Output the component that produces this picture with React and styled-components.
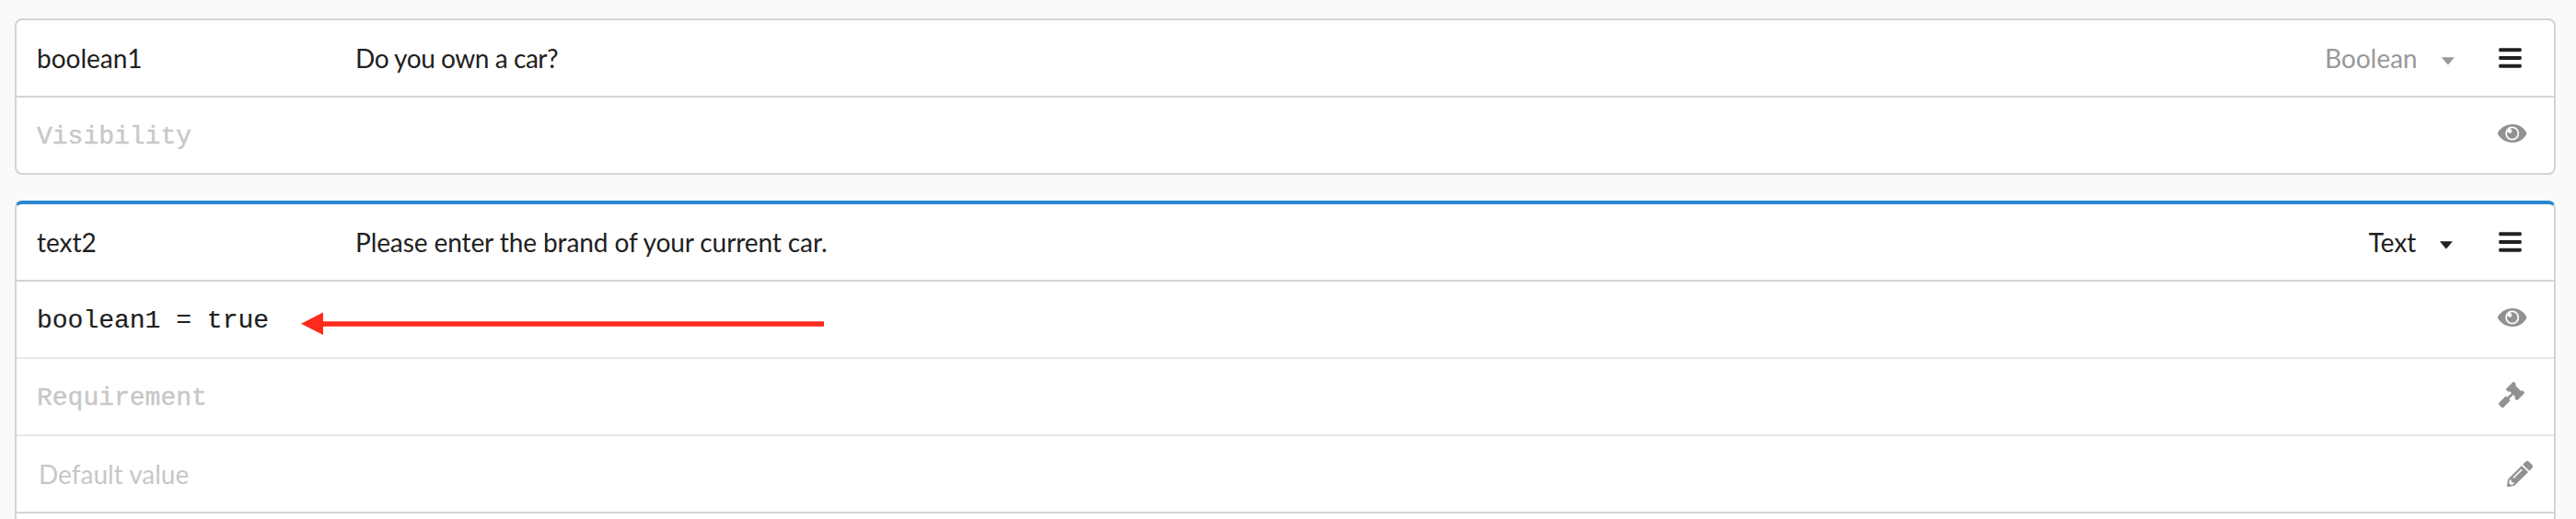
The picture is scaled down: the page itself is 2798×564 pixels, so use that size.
import React from "react";
import styled, { createGlobalStyle } from "styled-components";
import { FaBars, FaGavel, FaPencilAlt } from "react-icons/fa";

const GlobalStyle = createGlobalStyle`
  * { box-sizing: border-box; }
  body {
    margin: 0;
    background: #fafafa;
    font-family: Lato, "Liberation Sans", sans-serif;
    font-size: 28px;
    color: #212121;
  }
`;

const Page = styled.main`
  height: 564px;
  overflow: hidden;
  padding: 20px 22px 0 16px;
`;

const Card = styled.section`
  background: #fff;
  border: 2px solid #d4d4d5;
  border-top: ${(p) => (p.$active ? "4px solid #2a87d0" : "2px solid #d4d4d5")};
  border-radius: 8px;
  & + & { margin-top: 28px; }
`;

const Row = styled.div`
  position: relative;
  display: flex;
  align-items: center;
  height: ${(p) => (p.$last ? 82 : 84)}px;
  padding: 0 22px;
  border-bottom: ${(p) => (p.$last ? "none" : `2px solid ${p.$light ? "#e8e8e8" : "#d4d4d5"}`)};
`;

const Name = styled.div`
  width: 346px;
  white-space: nowrap;
`;

const Label = styled.div`
  flex: 1;
  white-space: nowrap;
  letter-spacing: ${(p) => p.$tracking || 0}px;
`;

const Type = styled.div`
  display: flex;
  align-items: center;
  gap: 26px;
  margin-right: ${(p) => (p.$muted ? 48.3 : 49.6)}px;
  color: ${(p) => (p.$muted ? "#999" : "#212121")};
`;

const Caret = styled.svg`
  display: block;
  width: 14px;
  height: 9px;
  margin-top: 6px;
  fill: currentColor;
`;

const MenuIcon = styled(FaBars)`
  width: 25px;
  height: 28px;
  margin-right: 13px;
`;

const Expression = styled.div`
  flex: 1;
  padding-top: 2px;
  font-family: "Courier New", "Liberation Mono", monospace;
  white-space: pre;
  color: ${(p) => (p.$filled ? "#212121" : "#c7c7c7")};
  -webkit-text-stroke: ${(p) => (p.$filled ? 0.2 : 0.4)}px currentColor;
`;

const Placeholder = styled.div`
  flex: 1;
  padding-left: 2px;
  color: #c7c7c7;
`;

const Tool = styled.span`
  display: flex;
  margin: ${(p) => p.$margin || "0 8px 4px 0"};
  color: #919191;
  svg { display: block; height: 28px; width: auto; }
`;

const Arrow = styled.svg`
  position: absolute;
  left: 308px;
  top: 32px;
  width: 570px;
  height: 28px;
`;

const Eye = () => (
  <svg viewBox="0 0 576 512" fill="currentColor">
    <path d="M569.354 231.631C512.969 135.949 407.81 72 288 72 168.14 72 63.004 135.994 6.646 231.631a47.999 47.999 0 0 0 0 48.739C63.031 376.051 168.19 440 288 440c119.86 0 224.996-63.994 281.354-159.631a47.997 47.997 0 0 0 0-48.738zM288 392c-75.162 0-136-60.827-136-136 0-75.162 60.826-136 136-136 75.162 0 136 60.826 136 136 0 75.162-60.826 136-136 136zm104-136c0 57.438-46.562 104-104 104s-104-46.562-104-104c0-17.708 4.431-34.379 12.236-48.973l-.001.032c0 23.651 19.173 42.823 42.824 42.823s42.824-19.173 42.824-42.823c0-23.651-19.173-42.824-42.824-42.824l-.032.001C253.621 156.431 270.292 152 288 152c57.438 0 104 46.562 104 104z" />
  </svg>
);

const TypePicker = ({ muted, children }) => (
  <Type $muted={muted}>
    {children}
    <Caret viewBox="0 0 14 9">
      <path d="M0 0.3H14L7.5 8.1Q7 8.6 6.5 8.1Z" />
    </Caret>
  </Type>
);

export default function App() {
  return (
    <>
      <GlobalStyle />
      <Page>
        <Card>
          <Row>
            <Name>boolean1</Name>
            <Label $tracking={-0.44}>Do you own a car?</Label>
            <TypePicker muted>Boolean</TypePicker>
            <MenuIcon />
          </Row>
          <Row $last>
            <Expression>Visibility</Expression>
            <Tool><Eye /></Tool>
          </Row>
        </Card>
        <Card $active>
          <Row>
            <Name>text2</Name>
            <Label $tracking={-0.09}>Please enter the brand of your current car.</Label>
            <TypePicker>Text</TypePicker>
            <MenuIcon />
          </Row>
          <Row $light>
            <Expression $filled>boolean1 = true</Expression>
            <Arrow viewBox="0 0 570 28" fill="#fc2b1c">
              <path d="M1 13.8 25 1.4V11.3H569V16.7H25V26Z" />
            </Arrow>
            <Tool><Eye /></Tool>
          </Row>
          <Row $light>
            <Expression>Requirement</Expression>
            <Tool $margin="0 10px 4px 0"><FaGavel /></Tool>
          </Row>
          <Row>
            <Placeholder>Default value</Placeholder>
            <Tool $margin="0 1px 0 0"><FaPencilAlt /></Tool>
          </Row>
          <Row $last />
        </Card>
      </Page>
    </>
  );
}
